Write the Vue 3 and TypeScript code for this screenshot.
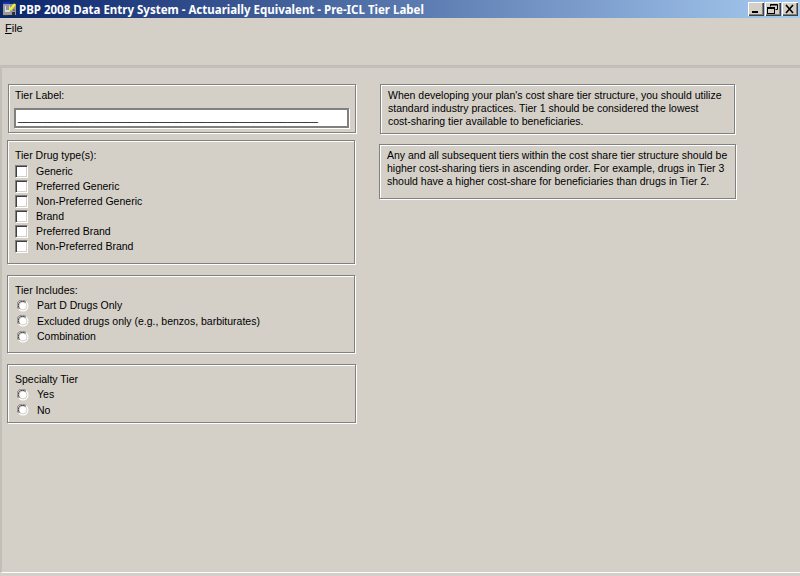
<script setup lang="ts">
const drugTypes: string[] = ['Generic', 'Preferred Generic', 'Non-Preferred Generic', 'Brand', 'Preferred Brand', 'Non-Preferred Brand']
const includes: string[] = ['Part D Drugs Only', 'Excluded drugs only (e.g., benzos, barbiturates)', 'Combination']
const specialty: string[] = ['Yes', 'No']
const blanks: string = '_'.repeat(49)
</script>

<template>
  <div class="window">
    <header class="titlebar">
      <svg class="app-icon" width="16" height="16" viewBox="0 0 16 16">
        <rect x="1" y="3" width="13" height="11" fill="#9a9a9a" />
        <rect x="1" y="1" width="7" height="2" fill="#1030c0" />
        <rect x="3" y="5" width="5" height="6" fill="#dcdcdc" />
        <path d="M4 6h3M4 8h3M10 5v2M12 8v2" stroke="#505050" />
        <path d="M8 9 13 3" stroke="#f8f020" stroke-width="2.4" />
        <path d="M13 1l2 1-1 2" fill="#303030" />
        <path d="M1 14h5v1H1zM10 11h3v3h-3z" fill="#303030" />
      </svg>
      <span class="title">PBP 2008 Data Entry System - Actuarially Equivalent - Pre-ICL Tier Label</span>
      <div class="controls">
        <button class="ctl" aria-label="Minimize">
          <svg width="16" height="14" viewBox="0 0 16 14"><rect x="4" y="9" width="6" height="2" fill="#000" /></svg>
        </button>
        <button class="ctl" aria-label="Restore">
          <svg width="16" height="14" viewBox="0 0 16 14" fill="none" stroke="#000"><path d="M5.5 4.5V2.5h7v5h-2" /><path d="M5.5 3H12" /><rect x="2.5" y="5.5" width="7" height="6" /><path d="M3 6.5h6" /></svg>
        </button>
        <button class="ctl" aria-label="Close">
          <svg width="16" height="14" viewBox="0 0 16 14" stroke="#000" stroke-width="1.6"><path d="M4 3l7 8M11 3l-7 8" /></svg>
        </button>
      </div>
    </header>

    <nav class="menubar"><span class="menu-item"><u>F</u>ile</span></nav>
    <div class="toolbar"></div>

    <main class="client">
      <section class="col-left">
        <div class="box box-label">
          <div class="caption">Tier Label:</div>
          <div class="field">{{ blanks }}</div>
        </div>

        <div class="box box-drug">
          <div class="caption drug-caption">Tier Drug type(s):</div>
          <label v-for="d in drugTypes" :key="d" class="row">
            <input class="check" type="checkbox" />
            <span>{{ d }}</span>
          </label>
        </div>

        <div class="box box-incl">
          <div class="caption">Tier Includes:</div>
          <label v-for="t in includes" :key="t" class="row row-wide">
            <svg class="radio" width="12" height="12" viewBox="0 0 12 12">
              <circle cx="6" cy="6" r="5.5" fill="#fff" />
              <circle cx="6" cy="6" r="4" fill="none" stroke="#d4d0c8" />
              <path d="M1.5 9A5 5 0 0 1 9 1.5" fill="none" stroke="#808080" />
              <path d="M2.5 8.5A4 4 0 0 1 8.5 2.5" fill="none" stroke="#404040" />
            </svg>
            <span>{{ t }}</span>
          </label>
        </div>

        <div class="box box-spec">
          <div class="caption">Specialty Tier</div>
          <label v-for="s in specialty" :key="s" class="row row-wide">
            <svg class="radio" width="12" height="12" viewBox="0 0 12 12">
              <circle cx="6" cy="6" r="5.5" fill="#fff" />
              <circle cx="6" cy="6" r="4" fill="none" stroke="#d4d0c8" />
              <path d="M1.5 9A5 5 0 0 1 9 1.5" fill="none" stroke="#808080" />
              <path d="M2.5 8.5A4 4 0 0 1 8.5 2.5" fill="none" stroke="#404040" />
            </svg>
            <span>{{ s }}</span>
          </label>
        </div>
      </section>

      <section class="col-right">
        <div class="box note note-a">When developing your plan's cost share tier structure, you should utilize<br />standard industry practices. Tier 1 should be considered the lowest<br />cost-sharing tier available to beneficiaries.</div>
        <div class="box note note-b">Any and all subsequent tiers within the cost share tier structure should be<br />higher cost-sharing tiers in ascending order. For example, drugs in Tier 3<br />should have a higher cost-share for beneficiaries than drugs in Tier 2.</div>
      </section>
    </main>
  </div>
</template>

<style scoped>
.window {
  width: 800px;
  height: 576px;
  display: flex;
  flex-direction: column;
  background: #d4d0c8;
  color: #000;
  font-family: "Liberation Sans", Arial, sans-serif;
  font-size: 10.5px;
  line-height: 15px;
  overflow: hidden;
}
.titlebar {
  height: 18px;
  flex: none;
  display: flex;
  align-items: center;
  background: linear-gradient(to right, #0a246a, #a6caf0);
  padding: 0 2px 0 2px;
}
.app-icon { flex: none; }
.title {
  margin-left: 1px;
  color: #fff;
  font-family: "Noto Sans", "DejaVu Sans", sans-serif;
  font-weight: 700;
  font-size: 11.5px;
  white-space: nowrap;
}
.controls { margin-left: auto; display: flex; gap: 1px; }
.ctl {
  width: 16px;
  height: 14px;
  padding: 0;
  border: 0;
  background: #d4d0c8;
  box-shadow: inset 1px 1px #fff, inset -1px -1px #404040, inset -2px -2px #808080;
  display: block;
}
.ctl svg { display: block; }
.menubar { height: 19px; flex: none; padding: 3px 0 0 5px; box-sizing: border-box; font-size: 11px; }
.toolbar { height: 31px; flex: none; border-bottom: 3px solid #c2bfb8; box-sizing: border-box; }
.client {
  flex: 1;
  display: flex;
  align-items: flex-start;
  border-left: 2px solid #c2bfb8;
  margin-bottom: 3px;
  border-bottom: 1px solid #fff;
}
.col-left { width: 354px; display: flex; flex-direction: column; padding-left: 5px; padding-top: 16px; box-sizing: border-box; }
.col-right { display: flex; flex-direction: column; padding-left: 23px; padding-top: 16px; }
.box {
  box-sizing: border-box;
  border: 1px solid #808080;
  box-shadow: inset 1px 1px #fff, 1px 1px #fff;
}
.caption { height: 15px; }
.drug-caption { margin-bottom: 1px; }
.box-label { width: 348px; height: 49px; margin-left: 1px; padding: 3px 6px; }
.field {
  box-sizing: border-box;
  width: 335px;
  height: 20px;
  margin: 5px 0 0 -1px;
  background: #fff;
  border: 2px solid #808080;
  box-shadow: 1px 1px #fff;
  padding: 0 0 0 2px;
  overflow: hidden;
  white-space: nowrap;
  font-size: 11px;
}
.box-drug { width: 348px; height: 124px; margin-top: 7px; padding: 7px 7px; }
.box-incl { width: 348px; height: 78px; margin-top: 11px; padding: 7px 7px; }
.box-spec { width: 349px; height: 59px; margin-top: 11px; padding: 7px 7px; }
.row { display: flex; align-items: center; height: 15px; }
.row-wide { height: 15.5px; }
.check {
  appearance: none;
  box-sizing: border-box;
  width: 13px;
  height: 13px;
  margin: 0 8px 0 0;
  background: #fff;
  border: 1px solid;
  border-color: #808080 #fff #fff #808080;
  box-shadow: inset 1px 1px #404040, inset -1px -1px #d4d0c8;
  flex: none;
}
.radio { flex: none; margin: 0 8px 0 2px; }
.note { line-height: 13px; white-space: nowrap; }
.note-a { width: 355px; height: 50px; margin-left: 1px; padding: 4px 7px; }
.note-b { width: 357px; height: 55px; margin-top: 10px; padding: 4px 7px; }
</style>
